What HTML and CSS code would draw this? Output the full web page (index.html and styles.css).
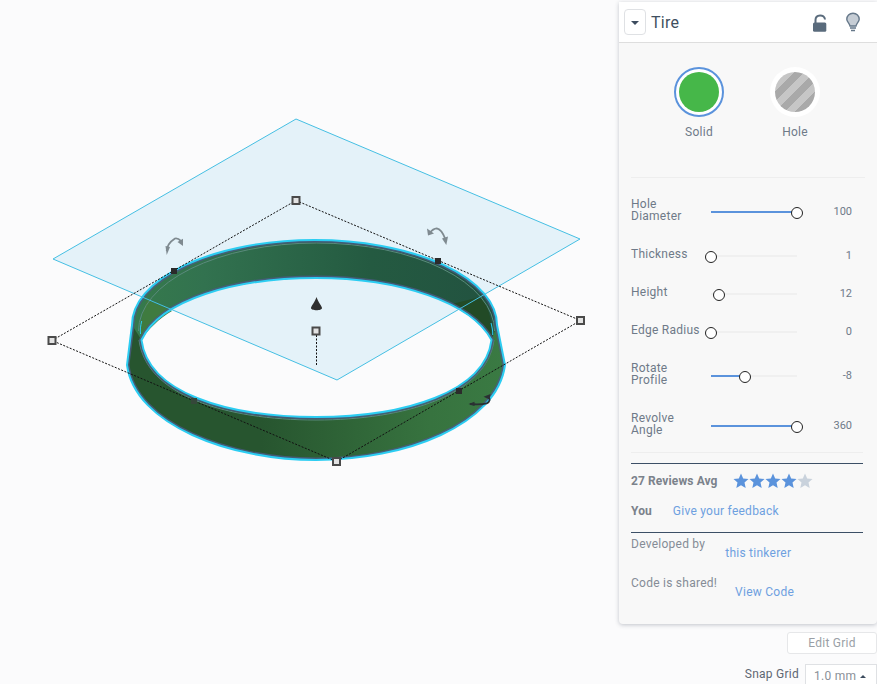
FILE: index.html
```html
<!DOCTYPE html>
<html lang="en">
<head>
    <meta charset="UTF-8">
    <meta name="viewport" content="width=device-width, initial-scale=1.0">
    <title>Tire</title>
    <link rel="stylesheet" href="styles.css">
</head>
<body>
    <div class="workplane">
        <svg class="scene" width="619" height="684" viewBox="0 0 619 684">
            <defs>
                <linearGradient id="band-top" gradientUnits="userSpaceOnUse" x1="130" y1="0" x2="500" y2="0">
                    <stop offset="0" stop-color="#367a4c"/>
                    <stop offset="0.2" stop-color="#32724f"/>
                    <stop offset="0.65" stop-color="#245a41"/>
                    <stop offset="1" stop-color="#225240"/>
                </linearGradient>
                <linearGradient id="band-low" gradientUnits="userSpaceOnUse" x1="130" y1="0" x2="505" y2="0">
                    <stop offset="0" stop-color="#27552f"/>
                    <stop offset="0.35" stop-color="#27552f"/>
                    <stop offset="0.8" stop-color="#37733f"/>
                    <stop offset="1" stop-color="#3a7a43"/>
                </linearGradient>
                <clipPath id="ring-clip">
                    <path clip-rule="evenodd" d="M132,325 A182.500,85 0 0 1 497,325 L505,365 C497,425 405,460 316,460 C230,460 135,425 127,365 Z M141.500,340 C148,392 225,417 316,417 C405,417 485,392 491.500,340 C472,303 400,278 316,278 C235,278 160,300 141.500,340 Z"/>
                </clipPath>
            </defs>

            <polygon class="plane" points="296,119 580,239 337,380 53,259"/>

            <!-- ring -->
            <path class="ring-low" fill-rule="evenodd" d="M132,325 A182.500,85 0 0 1 497,325 L505,365 C497,425 405,460 316,460 C230,460 135,425 127,365 Z M141.500,340 C148,392 225,417 316,417 C405,417 485,392 491.500,340 C472,303 400,278 316,278 C235,278 160,300 141.500,340 Z"/>
            <path class="ring-top" d="M132,325 A182.500,85 0 0 1 497,325 L491.500,340 C472,303 400,278 316,278 C235,278 160,300 141.500,340 Z"/>
            <path class="ring-back" d="M452,304 L480,297 C488,305 492,315 491.500,340 C485,325 470,313 452,304 Z"/>
            <path class="ring-side" d="M147,300 L172,311 C160,318 147,330 141.500,340 C140,325 142,312 147,300 Z"/>
            <path class="ring-rim" d="M138.500,331 A178,88 0 0 1 494.500,331"/>
            <path class="ring-rim" d="M139,340 C146,395 225,420 316,420 C405,420 487,395 494,340"/>
            <g clip-path="url(#ring-clip)">
                <path class="ring-shade" d="M132,325 A182.500,85 0 0 1 497,325 L505,365 C497,425 405,460 316,460 C230,460 135,425 127,365 Z"/>
                <path class="ring-shade" d="M141.500,340 C148,392 225,417 316,417 C405,417 485,392 491.500,340 C472,303 400,278 316,278 C235,278 160,300 141.500,340 Z"/>
            </g>
            <path class="ring-outline" d="M132,325 A182.500,85 0 0 1 497,325 L505,365 C497,425 405,460 316,460 C230,460 135,425 127,365 Z"/>
            <path class="ring-outline" d="M141.500,340 C148,392 225,417 316,417 C405,417 485,392 491.500,340 C472,303 400,278 316,278 C235,278 160,300 141.500,340 Z"/>
            <path class="ring-outline thin" d="M141.700,321 C140.500,326 140,330 140.500,334"/>
            <path class="ring-outline thin" d="M491,323 C492,327 493,331 492.700,335"/>

            <polygon class="plane-edge" points="296,119 580,239 337,380 53,259"/>

            <!-- selection box -->
            <polygon class="dash" points="296,200.500 580.500,320.500 336.500,461.500 52,340.500"/>
            <path class="dash" d="M316.500,335 V366"/>

            <g class="rotate">
                <path d="M166.700,251 C167,246 170,241.700 175,238.500 C177,238 179,239 181,241"/>
                <polygon points="165.500,246 170,247 166.700,255"/>
                <polygon points="177.500,242 183,238.800 183,246"/>
            </g>
            <g class="rotate">
                <path d="M430,232.700 C432,230 434,228.500 436.700,228.300 C440,229 443,233 445,238.300"/>
                <polygon points="427,228.500 428,235.500 434,233.500"/>
                <polygon points="442,238.500 448,236.500 446.300,245"/>
            </g>
            <g class="rotate dark">
                <path d="M470,404 C476,404.500 482,404.500 486.700,403.300 C490,402 490.500,399 488.300,396.700"/>
                <polygon points="468.500,404 474.500,401.800 474.500,406"/>
                <polygon points="483.500,396.700 490.500,394 489.500,399.500"/>
            </g>

            <path class="cone" d="M316.500,297 C318,302 322,306 322,308 C322,311 311,311 311,308 C311,306 315,302 316.500,297 Z"/>

            <rect class="dot" x="171" y="268" width="6" height="6"/>
            <rect class="dot" x="435" y="258" width="6" height="6"/>
            <rect class="dot" x="456" y="388" width="6" height="6"/>
            <rect class="dot faint" x="191" y="398" width="6" height="6"/>

            <rect class="grip" x="292.500" y="197" width="7" height="7"/>
            <rect class="grip" x="577" y="317" width="7" height="7"/>
            <rect class="grip" x="333" y="458" width="7" height="7"/>
            <rect class="grip" x="48.500" y="337" width="7" height="7"/>
            <rect class="grip" x="312.500" y="327.500" width="7" height="7"/>
        </svg>
    </div>

    <div class="sidebar">
        <div class="inspector">
            <div class="inspector-head">
                <button class="collapse"><span class="caret-down"></span></button>
                <span class="shape-name">Tire</span>
                <svg class="head-icon" width="16" height="20" viewBox="0 0 16 20">
                    <path d="M3.500,11 V8 C3.500,2 12.500,2 13,7.500" fill="none" stroke="#5a6b7c" stroke-width="2"/>
                    <rect x="1" y="10.500" width="13.300" height="9.300" rx="1.500" fill="#5a6b7c"/>
                </svg>
                <svg class="head-icon bulb" width="14" height="20" viewBox="0 0 14 20">
                    <path d="M7,1.200 C3.300,1.200 0.800,4 0.800,7.200 C0.800,10 3.500,11 4,14 H10 C10.500,11 13.200,10 13.200,7.200 C13.200,4 10.700,1.200 7,1.200 Z" fill="#c6cdd5" stroke="#66788a" stroke-width="1.400"/>
                    <path d="M4,16 H10 M5,18.500 H9" stroke="#66788a" stroke-width="1.400"/>
                </svg>
            </div>

            <div class="mode-row">
                <div class="mode">
                    <span class="swatch selected"><span class="fill-solid"></span></span>
                    <span class="mode-label">Solid</span>
                </div>
                <div class="mode">
                    <span class="swatch"><span class="fill-hole"></span></span>
                    <span class="mode-label">Hole</span>
                </div>
            </div>

            <div class="params">
                <div class="param">
                    <span class="param-name">Hole Diameter</span>
                    <div class="track"><div class="track-fill" style="width: 100%"></div><div class="knob" style="left: 100%"></div></div>
                    <span class="param-value">100</span>
                </div>
                <div class="param">
                    <span class="param-name">Thickness</span>
                    <div class="track"><div class="knob" style="left: 0%"></div></div>
                    <span class="param-value">1</span>
                </div>
                <div class="param">
                    <span class="param-name">Height</span>
                    <div class="track"><div class="knob" style="left: 9%"></div></div>
                    <span class="param-value">12</span>
                </div>
                <div class="param">
                    <span class="param-name">Edge Radius</span>
                    <div class="track"><div class="knob" style="left: 0%"></div></div>
                    <span class="param-value">0</span>
                </div>
                <div class="param">
                    <span class="param-name">Rotate Profile</span>
                    <div class="track"><div class="track-fill" style="width: 39%"></div><div class="knob" style="left: 39%"></div></div>
                    <span class="param-value">-8</span>
                </div>
                <div class="param">
                    <span class="param-name">Revolve Angle</span>
                    <div class="track"><div class="track-fill" style="width: 100%"></div><div class="knob" style="left: 100%"></div></div>
                    <span class="param-value">360</span>
                </div>
            </div>

            <div class="reviews">
                <div class="review-row">
                    <span class="review-label">27 Reviews Avg</span>
                    <span class="stars">
                        <svg class="star" width="16" height="16" viewBox="0 0 16 16"><path d="M8,0.500 L10.200,5.400 L15.500,6 L11.500,9.500 L12.700,15 L8,12.200 L3.300,15 L4.500,9.500 L0.500,6 L5.800,5.400 Z"/></svg>
                        <svg class="star" width="16" height="16" viewBox="0 0 16 16"><path d="M8,0.500 L10.200,5.400 L15.500,6 L11.500,9.500 L12.700,15 L8,12.200 L3.300,15 L4.500,9.500 L0.500,6 L5.800,5.400 Z"/></svg>
                        <svg class="star" width="16" height="16" viewBox="0 0 16 16"><path d="M8,0.500 L10.200,5.400 L15.500,6 L11.500,9.500 L12.700,15 L8,12.200 L3.300,15 L4.500,9.500 L0.500,6 L5.800,5.400 Z"/></svg>
                        <svg class="star" width="16" height="16" viewBox="0 0 16 16"><path d="M8,0.500 L10.200,5.400 L15.500,6 L11.500,9.500 L12.700,15 L8,12.200 L3.300,15 L4.500,9.500 L0.500,6 L5.800,5.400 Z"/></svg>
                        <svg class="star off" width="16" height="16" viewBox="0 0 16 16"><path d="M8,0.500 L10.200,5.400 L15.500,6 L11.500,9.500 L12.700,15 L8,12.200 L3.300,15 L4.500,9.500 L0.500,6 L5.800,5.400 Z"/></svg>
                    </span>
                </div>
                <div class="you-row">
                    <span class="review-label">You</span>
                    <a class="link">Give your feedback</a>
                </div>
            </div>

            <div class="credits">
                <div class="credit-row">
                    <span class="credit-label">Developed by</span>
                    <a class="link dev-link">this tinkerer</a>
                </div>
                <div class="credit-row">
                    <span class="credit-label">Code is shared!</span>
                    <a class="link code-link">View Code</a>
                </div>
            </div>
        </div>

        <button class="edit-grid">Edit Grid</button>
        <div class="snap">
            <span class="snap-label">Snap Grid</span>
            <div class="snap-select">1.0 mm <span class="caret-up"></span></div>
        </div>
    </div>
</body>
</html>
```

FILE: styles.css
```css
* {
    box-sizing: border-box;
}
html, body {
    height: 100%;
}
body {
    display: flex;
    margin: 0;
    height: 684px;
    overflow: hidden;
    background-color: #fbfbfc;
    color: #6f7a88;
    font-family: Roboto, "Noto Sans", sans-serif;
    font-size: 12px;
    letter-spacing: 0.25px;
}
.workplane {
    width: 619px;
    flex: none;
}
.scene {
    display: block;
}
.plane {
    fill: #e4f2f9;
}
.plane-edge {
    fill: none;
    stroke: #45bfe3;
    stroke-width: 1;
}
.ring-low {
    fill: url(#band-low);
}
.ring-top {
    fill: url(#band-top);
}
.ring-back {
    fill: #224a26;
}
.ring-side {
    fill: #3f7b3f;
}
.ring-rim {
    fill: none;
    stroke: #5a8a7c;
    stroke-width: 1;
}
.ring-shade {
    fill: none;
    stroke: #4b5b85;
    stroke-width: 5;
    opacity: 0.8;
}
.ring-outline {
    fill: none;
    stroke: #2ccdf2;
    stroke-width: 2;
}
.ring-outline.thin {
    stroke-width: 1;
}
.dash {
    fill: none;
    stroke: #111;
    stroke-width: 1;
    stroke-dasharray: 2 1.500;
}
.rotate {
    fill: #7f8a90;
}
.rotate path {
    fill: none;
    stroke: #7f8a90;
    stroke-width: 1.800;
}
.rotate.dark {
    fill: #2b3033;
}
.rotate.dark path {
    stroke: #2b3033;
}
.cone {
    fill: #2f2f2f;
}
.dot {
    fill: #2b2b2b;
}
.dot.faint {
    fill: #35473a;
}
.grip {
    fill: #e2e2e2;
    stroke: #4a4a4a;
    stroke-width: 2;
}

.sidebar {
    width: 258px;
    flex: none;
    display: flex;
    flex-direction: column;
    align-items: flex-end;
}
.inspector {
    width: 100%;
    height: 622px;
    flex: none;
    margin-top: 2px;
    background-color: #f8f8f8;
    border-radius: 0 0 4px 4px;
    box-shadow: 0 1px 4px rgba(60, 70, 90, 0.3);
}
.inspector-head {
    display: flex;
    align-items: center;
    height: 41px;
    padding: 0 17px 0 5px;
    background-color: #fff;
    border-bottom: 1px solid #dedede;
}
.collapse {
    display: flex;
    align-items: center;
    justify-content: center;
    width: 22px;
    height: 26px;
    padding: 0;
    background-color: #fff;
    border: 1px solid #dfe1e4;
    border-radius: 4px;
}
.caret-down {
    width: 0;
    height: 0;
    border-left: 4px solid transparent;
    border-right: 4px solid transparent;
    border-top: 4px solid #3c4c5e;
    margin-top: 2px;
}
.shape-name {
    flex: 1;
    margin-left: 5px;
    color: #3f4f60;
    font-size: 16px;
}
.head-icon {
    display: block;
}
.bulb {
    margin-left: 18px;
}
.mode-row {
    display: flex;
    justify-content: center;
    gap: 46px;
    height: 135px;
    padding: 24px 2px 0 0;
    margin: 0 12px;
    border-bottom: 1px solid #eee;
}
.mode {
    display: flex;
    flex-direction: column;
    align-items: center;
    gap: 8px;
}
.swatch {
    display: flex;
    align-items: center;
    justify-content: center;
    width: 50px;
    height: 50px;
    background-color: #fff;
    border-radius: 50%;
}
.swatch.selected {
    border: 2px solid #5b93dc;
}
.fill-solid, .fill-hole {
    display: block;
    width: 40px;
    height: 40px;
    border-radius: 50%;
}
.fill-solid {
    background-color: #46b749;
}
.fill-hole {
    background: repeating-linear-gradient(135deg, #a9a9a9 0, #a9a9a9 7px, #c6c6c6 7px, #c6c6c6 14px);
}
.mode-label {
    line-height: 14px;
}
.params {
    display: flex;
    flex-direction: column;
    gap: 22px;
    margin: 0 14px 0 12px;
    padding: 20px 0 12px;
    border-bottom: 1px solid #eee;
}
.param {
    display: flex;
    align-items: center;
}
.param-name {
    width: 70px;
    flex: none;
    padding-bottom: 4px;
    line-height: 12px;
}
.track {
    position: relative;
    width: 86px;
    height: 2px;
    flex: none;
    margin-left: 10px;
    background-color: #f0f0f0;
}
.track-fill {
    height: 2px;
    background-color: #5b93dc;
}
.knob {
    position: absolute;
    top: 2px;
    width: 12px;
    height: 12px;
    margin: -6px 0 0 -6px;
    background-color: #fff;
    border: 1.500px solid #222;
    border-radius: 50%;
}
.param-value {
    flex: 1;
    padding-right: 11px;
    text-align: right;
    font-size: 11px;
    line-height: 12px;
    letter-spacing: 0;
}
.reviews {
    margin: 10px 14px 0 12px;
    border-top: 1px solid #3c4f66;
    border-bottom: 1px solid #3c4f66;
    height: 70px;
    padding-top: 8px;
}
.review-row, .you-row {
    display: flex;
    align-items: center;
}
.review-row {
    height: 18px;
}
.review-label {
    font-weight: 700;
    color: #7b828b;
    letter-spacing: 0.1px;
}
.stars {
    display: flex;
    margin-left: 15px;
}
.star {
    display: block;
    fill: #5b93dc;
}
.star.off {
    fill: #c9d2dc;
}
.you-row {
    margin-top: 14px;
    gap: 21px;
}
.link {
    color: #6ea0e0;
}
.credits {
    margin: 0 14px 0 12px;
}
.credit-row {
    display: flex;
    align-items: flex-start;
    height: 39px;
    padding-top: 4px;
    color: #858c96;
}
.credit-row .link {
    margin-top: 9px;
}
.dev-link {
    margin-left: 20px;
}
.code-link {
    margin-left: 18px;
}
.edit-grid {
    width: 90px;
    height: 22px;
    flex: none;
    margin-top: 8px;
    padding: 0;
    background-color: #fff;
    border: 1px solid #e6e7e9;
    border-radius: 3px;
    color: #9a9fa6;
    font-family: inherit;
    font-size: 12px;
    letter-spacing: 0.25px;
}
.snap {
    display: flex;
    align-items: flex-start;
    flex: none;
    margin-top: 10px;
}
.snap-label {
    margin: 3px 6px 0 0;
    color: #5f6773;
}
.snap-select {
    display: flex;
    align-items: center;
    justify-content: space-between;
    width: 72px;
    height: 24px;
    padding: 0 10px 0 8px;
    background-color: #fff;
    border: 1px solid #dfe1e4;
    color: #8a9098;
}
.caret-up {
    width: 0;
    height: 0;
    border-left: 3px solid transparent;
    border-right: 3px solid transparent;
    border-bottom: 3px solid #3c4c5e;
}
```
